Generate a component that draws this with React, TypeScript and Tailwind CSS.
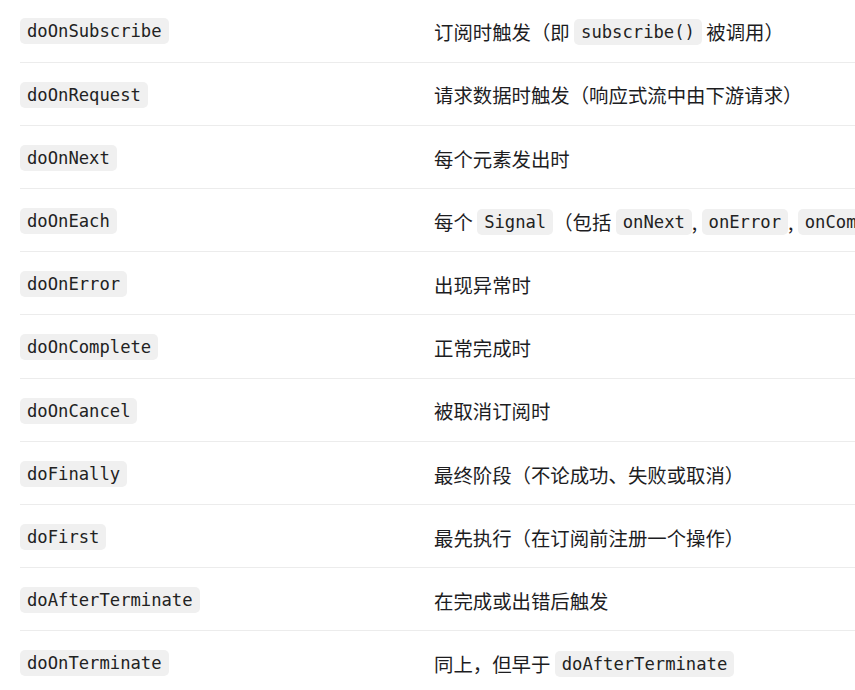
import React from "react";

type Part = string | { code: string };

type Row = {
    name: string;
    desc: Part[];
};

const rows: Row[] = [
    { name: "doOnSubscribe", desc: ["订阅时触发（即 ", { code: "subscribe()" }, " 被调用）"] },
    { name: "doOnRequest", desc: ["请求数据时触发（响应式流中由下游请求）"] },
    { name: "doOnNext", desc: ["每个元素发出时"] },
    {
        name: "doOnEach",
        desc: ["每个 ", { code: "Signal" }, "（包括 ", { code: "onNext" }, ", ", { code: "onError" }, ", ", { code: "onComplete" }, "）"],
    },
    { name: "doOnError", desc: ["出现异常时"] },
    { name: "doOnComplete", desc: ["正常完成时"] },
    { name: "doOnCancel", desc: ["被取消订阅时"] },
    { name: "doFinally", desc: ["最终阶段（不论成功、失败或取消）"] },
    { name: "doFirst", desc: ["最先执行（在订阅前注册一个操作）"] },
    { name: "doAfterTerminate", desc: ["在完成或出错后触发"] },
    { name: "doOnTerminate", desc: ["同上，但早于 ", { code: "doAfterTerminate" }] },
];

function Code({ children }: { children: React.ReactNode }) {
    return (
        <code
            className="inline-block h-[26px] rounded-[5px] bg-[#f0f0f0] px-[7px] text-[17.2px] leading-[26px] text-[#222] align-middle"
            style={{ fontFamily: '"DejaVu Sans Mono", "Liberation Mono", monospace' }}
        >
            {children}
        </code>
    );
}

export default function App() {
    return (
        <div
            className="w-[855px] h-[690px] overflow-hidden bg-white text-[#1d1d1f]"
            style={{ fontFamily: '"Noto Sans CJK SC", "Noto Sans", sans-serif' }}
        >
            <div className="ml-[20px] mt-[-1.5px] w-[1200px]">
                {rows.map((row) => (
                    <div
                        key={row.name}
                        className="flex h-[63.2px] items-center border-t border-[#ececec] whitespace-nowrap"
                    >
                        <div className="w-[414px] shrink-0">
                            <Code>{row.name}</Code>
                        </div>
                        <div className="text-[19.4px] leading-[26px]">
                            {row.desc.map((p, i) =>
                                typeof p === "string" ? (
                                    <span key={i} className="align-middle">{p}</span>
                                ) : (
                                    <Code key={i}>{p.code}</Code>
                                )
                            )}
                        </div>
                    </div>
                ))}
            </div>
        </div>
    );
}
